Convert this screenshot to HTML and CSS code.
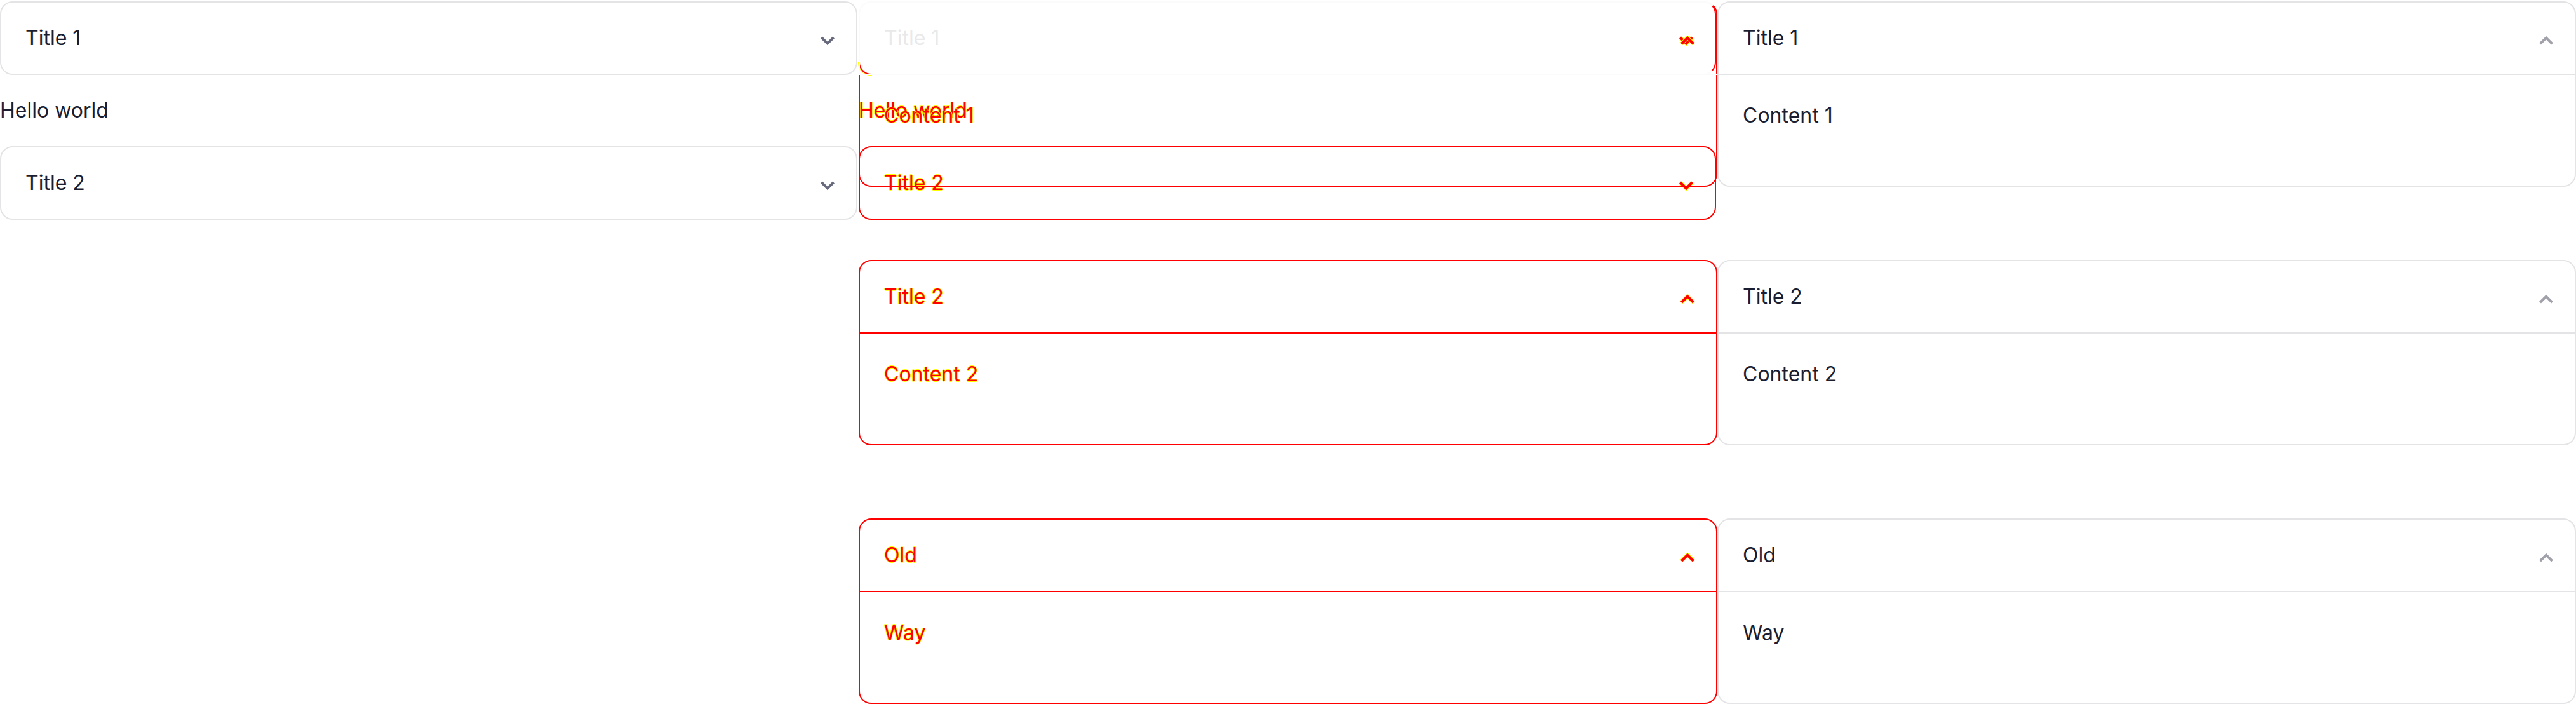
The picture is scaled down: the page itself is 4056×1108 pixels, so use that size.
FILE: index.html
```html
<!DOCTYPE html>
<html lang="en">
<head>
<meta charset="utf-8">
<title>Accordion visual diff</title>
<link rel="stylesheet" href="styles.css">
</head>
<body>
<div class="page">
  <section class="col col-a">
    <div class="acc-item">
      <div class="acc-head">
        <span class="acc-title">Title 1</span>
        <svg class="chev chev-dark" viewBox="0 0 24 16"><path d="M2.5 3 L12 12.5 L21.5 3"/></svg>
      </div>
    </div>
    <p class="note">Hello world</p>
    <div class="acc-item">
      <div class="acc-head">
        <span class="acc-title">Title 2</span>
        <svg class="chev chev-dark" viewBox="0 0 24 16"><path d="M2.5 3 L12 12.5 L21.5 3"/></svg>
      </div>
    </div>
  </section>

  <section class="col col-diff">
    <div class="layer layer-a">
      <div class="acc-item d-first-a">
        <div class="acc-head">
          <span class="acc-title faded">Title 1</span>
          <svg class="chev d-chev" viewBox="0 0 24 16"><path class="aa" d="M2.5 3 L12 12.5 L21.5 3"/><path d="M2.5 3 L12 12.5 L21.5 3"/></svg>
        </div>
      </div>
      <p class="note red">Hello world</p>
      <div class="acc-item d-red">
        <div class="acc-head">
          <span class="acc-title red">Title 2</span>
          <svg class="chev d-chev" viewBox="0 0 24 16"><path class="aa" d="M2.5 3 L12 12.5 L21.5 3"/><path d="M2.5 3 L12 12.5 L21.5 3"/></svg>
        </div>
      </div>
    </div>
    <div class="layer layer-b">
      <div class="acc-item d-split">
        <div class="acc-head">
          <span class="acc-title ghost">Title 1</span>
          <svg class="chev d-chev" viewBox="0 0 24 16"><path class="aa" d="M2.5 13 L12 3.5 L21.5 13"/><path d="M2.5 13 L12 3.5 L21.5 13"/></svg>
        </div>
        <div class="acc-body"><span class="red">Content 1</span></div>
      </div>
      <div class="acc-item d-red">
        <div class="acc-head">
          <span class="acc-title red">Title 2</span>
          <svg class="chev d-chev" viewBox="0 0 24 16"><path class="aa" d="M2.5 13 L12 3.5 L21.5 13"/><path d="M2.5 13 L12 3.5 L21.5 13"/></svg>
        </div>
        <div class="acc-body"><span class="red">Content 2</span></div>
      </div>
      <div class="acc-item d-red">
        <div class="acc-head">
          <span class="acc-title red">Old</span>
          <svg class="chev d-chev" viewBox="0 0 24 16"><path class="aa" d="M2.5 13 L12 3.5 L21.5 13"/><path d="M2.5 13 L12 3.5 L21.5 13"/></svg>
        </div>
        <div class="acc-body"><span class="red">Way</span></div>
      </div>
    </div>
  </section>

  <section class="col col-b">
    <div class="acc-item">
      <div class="acc-head">
        <span class="acc-title">Title 1</span>
        <svg class="chev chev-light" viewBox="0 0 24 16"><path d="M2.5 13 L12 3.5 L21.5 13"/></svg>
      </div>
      <div class="acc-body">Content 1</div>
    </div>
    <div class="acc-item">
      <div class="acc-head">
        <span class="acc-title">Title 2</span>
        <svg class="chev chev-light" viewBox="0 0 24 16"><path d="M2.5 13 L12 3.5 L21.5 13"/></svg>
      </div>
      <div class="acc-body">Content 2</div>
    </div>
    <div class="acc-item">
      <div class="acc-head">
        <span class="acc-title">Old</span>
        <svg class="chev chev-light" viewBox="0 0 24 16"><path d="M2.5 13 L12 3.5 L21.5 13"/></svg>
      </div>
      <div class="acc-body">Way</div>
    </div>
  </section>
</div>
</body>
</html>
```

FILE: styles.css
```css
html, body {
  margin: 0;
  padding: 0;
  background: #ffffff;
}

body {
  font-family: Inter, "Noto Sans", sans-serif;
  font-size: 32px;
  line-height: 48px;
  color: #1b1e31;
}

.page {
  display: flex;
  width: 4056px;
  height: 1108px;
  overflow: hidden;
}

.col {
  width: 1352px;
  flex: none;
  box-sizing: border-box;
  padding-top: 2px;
}

.col-a {
  padding-right: 2px;
}

.acc-item {
  border: 2px solid #e4e4e7;
  border-radius: 20px;
}

.acc-head {
  display: flex;
  align-items: center;
  justify-content: space-between;
  padding: 32px 33px 32px 38px;
}

.chev {
  width: 24px;
  height: 16px;
  margin-top: 8px;
  fill: none;
  stroke-width: 4;
  stroke-linecap: butt;
  stroke-linejoin: miter;
}

.chev-dark { stroke: #666a7c; }
.chev-light { stroke: #a1a1ab; }

.acc-body {
  border-top: 2px solid #e4e4e7;
  padding: 40px 38px 86px;
}

.note {
  margin: 32px 0;
}

.col-b .acc-item + .acc-item {
  margin-top: 115px;
}

/* ---------- diff column ---------- */
.col-diff {
  position: relative;
  padding-top: 0;
}

.layer {
  position: absolute;
  inset: 0;
  padding-top: 2px;
}

.layer-a {
  padding-right: 2px;
}

.red {
  color: #ff0000;
  text-shadow: 1px 0 #ffff00, -1px 0 #ffff00, 0 1px #ffff00, 0 -1px #ffff00;
}

.faded {
  color: #e9e9ea;
}

.ghost {
  color: transparent;
}

.d-chev path {
  stroke: #ff0000;
  stroke-width: 4;
}

.d-chev path.aa {
  stroke: #ffff00;
  stroke-width: 6;
}

.d-red,
.d-red .acc-body {
  border-color: #ff0000;
}

.d-first-a {
  position: relative;
  border-color: #fbfbfb #ff0000 #fbfbfb #fbfbfb;
}

/* A's rounded bottom-left corner differs from B's straight border */
.d-first-a::after {
  content: "";
  position: absolute;
  left: -2px;
  bottom: -2px;
  width: 20px;
  height: 20px;
  border-left: 2px solid #ff0000;
  border-bottom: 2px solid #ff0000;
  border-bottom-left-radius: 20px;
  box-shadow: -1px 1px 0 #ffff00;
}

.d-split {
  border: none;
}

.d-split .acc-head {
  border: 2px solid #fbfbfb;
  border-right-color: #ff0000;
  border-bottom: 2px solid #fbfbfb;
  border-radius: 20px 20px 0 0;
}

.d-split .acc-body {
  border: 2px solid #ff0000;
  border-top: none;
  border-radius: 0 0 20px 20px;
}

.layer-b .acc-item + .acc-item {
  margin-top: 115px;
}
```
